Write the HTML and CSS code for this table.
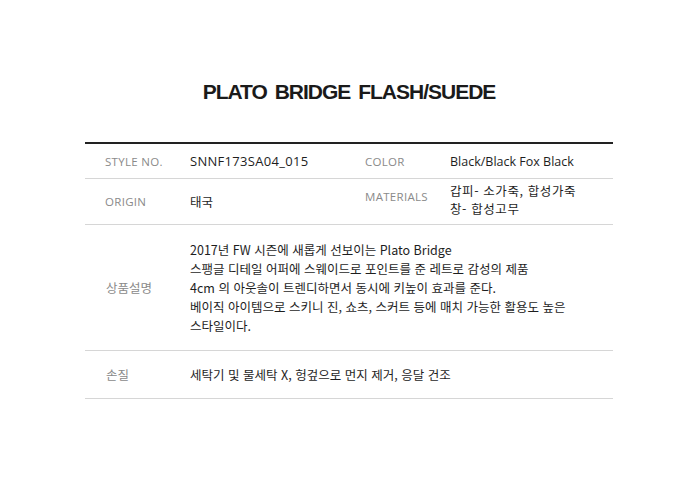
FILE: index.html
```html
<!DOCTYPE html>
<html lang="ko">
<head>
<meta charset="utf-8">
<link rel="stylesheet" href="styles.css">
</head>
<body>
<div class="page">
  <h1 class="title">PLATO BRIDGE FLASH/SUEDE</h1>
  <div class="spec">
    <div class="row row-pair row-style">
      <div class="label">STYLE NO.</div>
      <div class="value en code">SNNF173SA04_015</div>
      <div class="label">COLOR</div>
      <div class="value en">Black/Black Fox Black</div>
    </div>
    <div class="row row-pair row-origin">
      <div class="label">ORIGIN</div>
      <div class="value">태국</div>
      <div class="label label-top">MATERIALS</div>
      <div class="value value-top">갑피- 소가죽, 합성가죽<br>창- 합성고무</div>
    </div>
    <div class="row row-wide row-desc">
      <div class="label label-ko">상품설명</div>
      <div class="value desc">2017년 FW 시즌에 새롭게 선보이는 Plato Bridge<br>스팽글 디테일 어퍼에 스웨이드로 포인트를 준 레트로 감성의 제품<br>4cm 의 아웃솔이 트렌디하면서 동시에 키높이 효과를 준다.<br>베이직 아이템으로 스키니 진, 쇼츠, 스커트 등에 매치 가능한 활용도 높은<br>스타일이다.</div>
    </div>
    <div class="row row-wide row-care">
      <div class="label label-ko">손질</div>
      <div class="value">세탁기 및 물세탁 X, 헝겊으로 먼지 제거, 응달 건조</div>
    </div>
  </div>
</div>
</body>
</html>
```

FILE: styles.css
```css
html, body {
  margin: 0;
  padding: 0;
  background: #fff;
}
body {
  font-family: "Noto Sans CJK KR", "Noto Sans", sans-serif;
  color: #222;
}
.page {
  width: 528px;
  margin-left: 85px;
}
.title {
  margin: 0;
  padding: 80px 0 38px;
  text-align: center;
  font-family: "Liberation Sans", sans-serif;
  font-weight: bold;
  font-size: 21px;
  line-height: 24px;
  letter-spacing: -1px;
  word-spacing: 3px;
  color: #1a1a1a;
}
.spec {
  border-top: 2px solid #222;
}
.row {
  display: grid;
  align-items: center;
  border-bottom: 1px solid #d6d6d6;
}
.row-pair {
  grid-template-columns: 105px 155px 105px 1fr;
}
.row-wide {
  grid-template-columns: 105px 1fr;
}
.row-style {
  height: 34px;
}
.row-origin {
  height: 45px;
}
.row-desc {
  height: 125px;
}
.row-care {
  height: 47px;
}
.label {
  padding-left: 20px;
  font-family: "Open Sans", "Noto Sans CJK KR", sans-serif;
  font-size: 11.5px;
  color: #8a8a8a;
  letter-spacing: 0.3px;
}
.label-ko {
  padding-left: 21px;
  font-size: 12.5px;
  letter-spacing: 0;
}
.value {
  font-size: 12.5px;
  color: #1e1e1e;
  line-height: 17px;
}
.value.en {
  font-family: "Open Sans", sans-serif;
  font-size: 12.5px;
}
.value.code {
  font-size: 13px;
  letter-spacing: 0.3px;
}
.label-top {
  align-self: start;
  padding-top: 10px;
}
.value-top {
  align-self: start;
  padding-top: 3px;
  font-size: 12.5px;
  line-height: 18px;
  letter-spacing: 0.6px;
}
.desc {
  line-height: 19px;
}
```
